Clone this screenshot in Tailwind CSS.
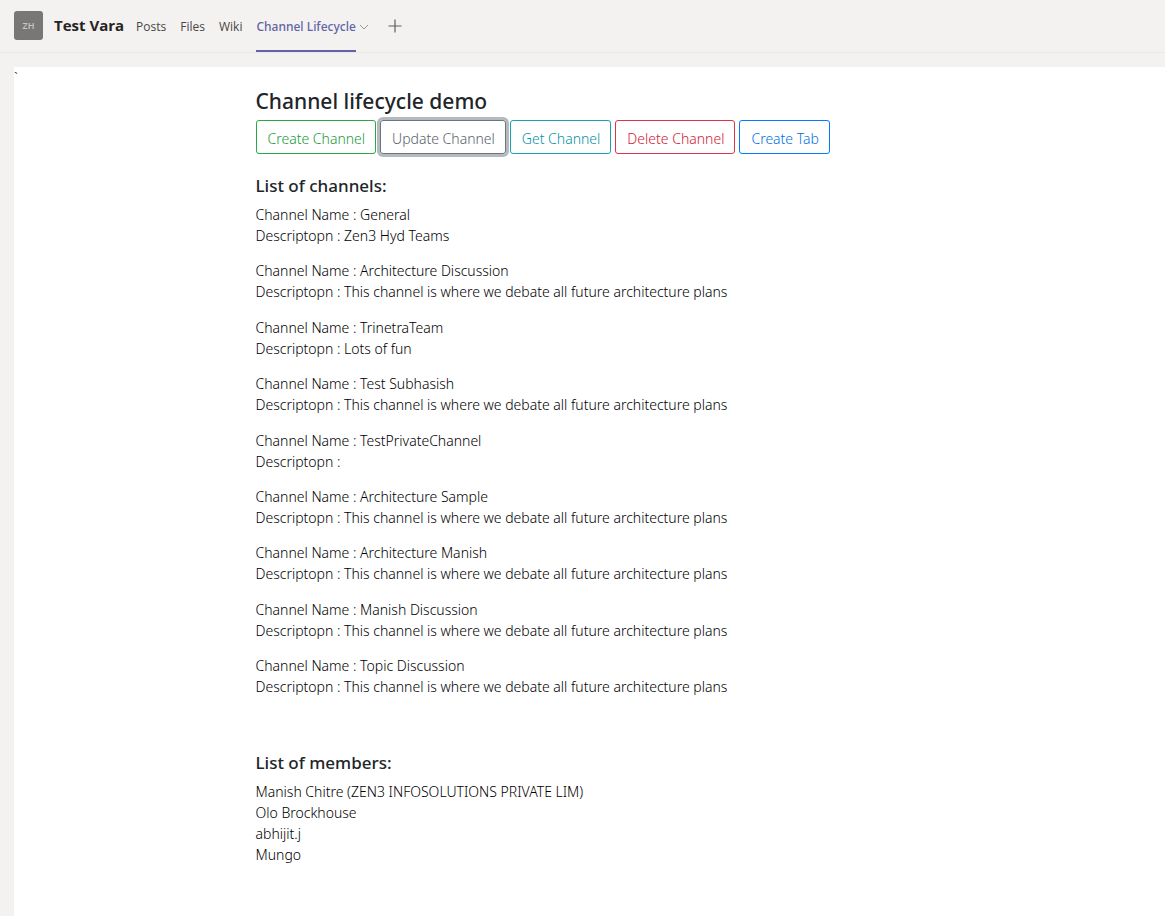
<!DOCTYPE html>
<html lang="en">
<head>
<meta charset="utf-8">
<title>Channel Lifecycle</title>
<script src="https://cdn.jsdelivr.net/npm/@tailwindcss/browser@4"></script>
</head>
<body class="flex min-h-screen flex-col bg-[#f3f2f1] font-['Noto_Sans','Open_Sans',sans-serif] text-[#212529]">
<header class="flex h-[53px] border-b border-[#e9e8e7] pl-3.5 font-['Open_Sans',sans-serif] text-xs text-[#484644]">
  <div class="mt-[11px] flex size-[29px] items-center justify-center rounded-[3px] bg-[#797775] text-[9px] font-semibold text-[#c8c6c4]">ZH</div>
  <h1 class="ml-[11px] pt-3.5 text-[15px] leading-[22px] font-bold text-[#252423]">Test Vara</h1>
  <nav class="ml-3 flex gap-3.5 leading-[22px]" aria-label="Channel tabs">
    <a href="#" class="pt-4">Posts</a>
    <a href="#" class="pt-4">Files</a>
    <a href="#" class="pt-4">Wiki</a>
    <a href="#" class="border-b-2 border-[#6264a7] pt-4 font-['Noto_Sans','Open_Sans',sans-serif] font-medium text-[#6264a7]" aria-current="page">Channel Lifecycle</a>
  </nav>
  <button type="button" aria-label="Tab options" class="ml-[3px] flex h-[53px] items-center text-[#979593]">
    <svg class="size-[10px]" viewBox="0 0 10 10" fill="none" stroke="currentColor"><path d="M1 3l4 4 4-4"/></svg>
  </button>
  <button type="button" aria-label="Add a tab" class="ml-[19px] flex h-[52px] items-center text-[#605e5c]">
    <svg class="size-[14px]" viewBox="0 0 14 14" fill="none" stroke="currentColor" stroke-width="1.2"><path d="M7 .5v13M.5 7h13"/></svg>
  </button>
</header>
<main class="mt-3.5 ml-3.5 grow bg-white pb-12 text-sm leading-[21px] font-light">
  <p class="font-['Liberation_Serif',serif] text-xs leading-5 font-normal">`</p>
  <div class="mx-auto max-w-[668px]">
    <h2 class="text-[21px] leading-7 font-medium">Channel lifecycle demo</h2>
    <div class="mt-[5px] flex flex-wrap gap-1">
      <button type="button" class="h-[34px] rounded-[3px] border border-[#28a745] pt-0.5 pr-2.5 pl-[11px] text-[#1c9a39]">Create Channel</button>
      <button type="button" class="h-[34px] rounded-[3px] border border-[#6c757d] pt-0.5 pr-2.5 pl-[11px] text-[#59626a] ring-3 ring-[#b5babe]">Update Channel</button>
      <button type="button" class="h-[34px] rounded-[3px] border border-[#17a2b8] pt-0.5 pr-2.5 pl-[11px] text-[#0992a8]">Get Channel</button>
      <button type="button" class="h-[34px] rounded-[3px] border border-[#dc3545] pt-0.5 pr-2.5 pl-[11px] text-[#d32032]">Delete Channel</button>
      <button type="button" class="h-[34px] rounded-[3px] border border-[#007bff] pt-0.5 pr-2.5 pl-[11px] text-[#006fe8]">Create Tab</button>
    </div>
    <h3 class="mt-5 text-[17px] leading-6 font-medium">List of channels:</h3>
    <div class="mt-1.5 flex min-h-[493px] flex-col justify-between text-black">
      <p>Channel Name : General<br>Descriptopn : Zen3 Hyd Teams</p>
      <p>Channel Name : Architecture Discussion<br>Descriptopn : This channel is where we debate all future architecture plans</p>
      <p>Channel Name : TrinetraTeam<br>Descriptopn : Lots of fun</p>
      <p>Channel Name : Test Subhasish<br>Descriptopn : This channel is where we debate all future architecture plans</p>
      <p>Channel Name : TestPrivateChannel<br>Descriptopn :</p>
      <p>Channel Name : Architecture Sample<br>Descriptopn : This channel is where we debate all future architecture plans</p>
      <p>Channel Name : Architecture Manish<br>Descriptopn : This channel is where we debate all future architecture plans</p>
      <p>Channel Name : Manish Discussion<br>Descriptopn : This channel is where we debate all future architecture plans</p>
      <p>Channel Name : Topic Discussion<br>Descriptopn : This channel is where we debate all future architecture plans</p>
    </div>
    <h3 class="mt-[54px] text-[17px] leading-6 font-medium">List of members:</h3>
    <ul class="mt-1.5 text-black">
      <li>Manish Chitre (ZEN3 INFOSOLUTIONS PRIVATE LIM)</li>
      <li>Olo Brockhouse</li>
      <li>abhijit.j</li>
      <li>Mungo</li>
    </ul>
  </div>
</main>
</body>
</html>
